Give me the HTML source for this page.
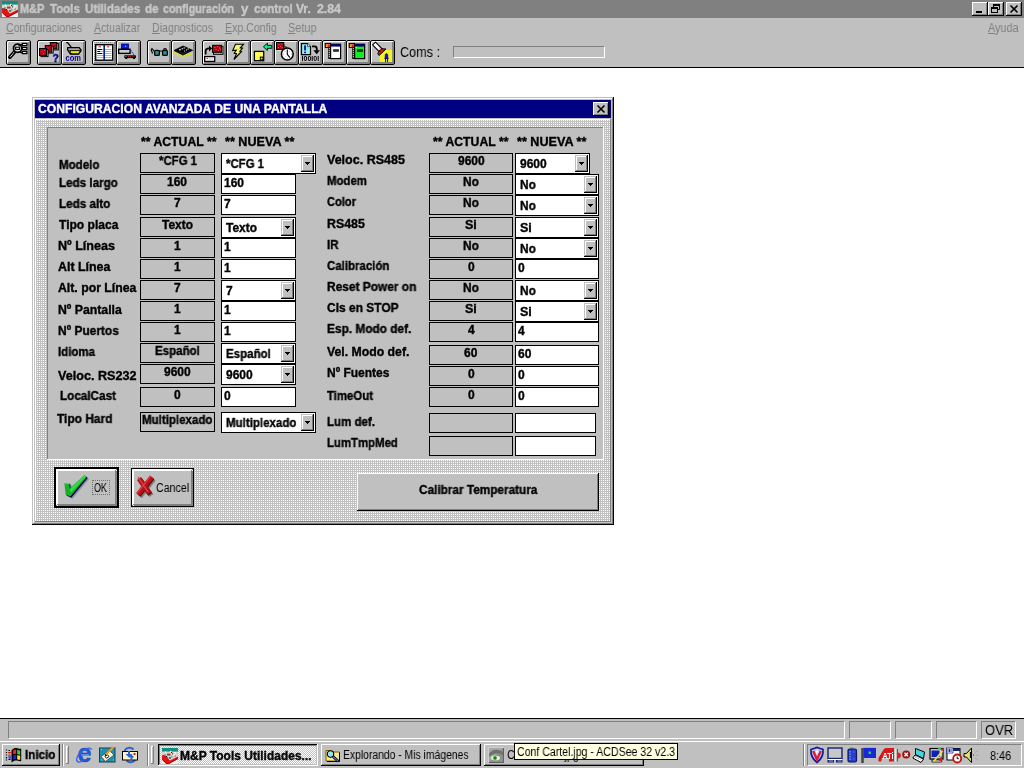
<!DOCTYPE html>
<html lang="es"><head><meta charset="utf-8"><title>M&amp;P Tools</title>
<style>
html,body{margin:0;padding:0}
body{width:1024px;height:768px;overflow:hidden;background:#fff;position:relative;font-family:"Liberation Sans",sans-serif}
div,svg.a{position:absolute}
.t{position:absolute;white-space:nowrap;transform-origin:0 0;display:block;will-change:transform}
.t u{text-decoration:underline}
.dither{background-color:#c0c0c0;background-image:linear-gradient(90deg,#c0c0c0 50%,transparent 50%),linear-gradient(#fff 50%,#c0c0c0 50%);background-size:2px 2px}
.dither2{background-color:#fff;background-image:linear-gradient(45deg,#c0c0c0 25%,transparent 25%,transparent 75%,#c0c0c0 75%),linear-gradient(45deg,#c0c0c0 25%,transparent 25%,transparent 75%,#c0c0c0 75%);background-size:2px 2px;background-position:0 0,1px 1px}
.tb{width:25px;height:25px;box-sizing:border-box;border:1px solid #000;border-radius:2px;background:#c0c0c0;box-shadow:inset 1px 1px 0 #fff,inset -1px -1px 0 #808080,inset -2px -2px 0 #808080}
.tb svg{position:absolute;left:0;top:0;will-change:transform}
</style></head>
<body>
<div style="left:0px;top:0px;width:1024px;height:18px;background:#808080"></div>
<div style="left:0px;top:18px;width:1024px;height:49px;background:#c0c0c0"></div>
<div style="left:0px;top:67px;width:1024px;height:1px;background:#000"></div>
<svg class="a" style="left:2px;top:1px" width="16" height="16" viewBox="0 0 16 16"><rect width="16" height="16" fill="#ececec"/><rect width="16" height="3.800" fill="#109080"/><path d="M0 3.800h16v5L8 12.800 3 7.200 0 8z" fill="#d8d4cc"/><path d="M0 8L3 7.200 8 12.600 16 8.400V10.800L6.500 16H4.500L0 11.500z" fill="#e81010"/><path d="M0.500 11.800L4.700 15.800h1.600L16 10.600" fill="none" stroke="#a00000" stroke-width="1"/><path d="M.5 7.500h1M2.500 7h1M9 4.500h1.200M10 6h1.200M12.500 8h1M8 10h1M4 8l1.500 1.500" stroke="#101010" stroke-width="1"/><path d="M3.500 3.600v1.600M8 3.600h1.400M12 4.800h2M6.500 8.500h1M10.500 7h2.500M7 11h.8" stroke="#fff" stroke-width="1.100"/><path d="M5 5.600h3.500v2H5z" fill="#984030"/><path d="M6.800 8.800h1.400v2H6.800z" fill="#208878"/><path d="M9 7.500h1.500v2.500H9z" fill="#b0a880"/></svg>
<span class="t" id="t0" style="left:20.40px;top:1.84px;font-size:12px;line-height:14px;color:#c8c8c8;transform:scaleX(0.9073);font-weight:bold;-webkit-text-stroke:0.35px;">M&amp;P</span>
<span class="t" id="t1" style="left:50.40px;top:1.84px;font-size:12px;line-height:14px;color:#c8c8c8;transform:scaleX(0.9579);font-weight:bold;-webkit-text-stroke:0.35px;">Tools</span>
<span class="t" id="t2" style="left:84.80px;top:1.84px;font-size:12px;line-height:14px;color:#c8c8c8;transform:scaleX(0.9615);font-weight:bold;-webkit-text-stroke:0.35px;">Utilidades</span>
<span class="t" id="t3" style="left:144.80px;top:1.84px;font-size:12px;line-height:14px;color:#c8c8c8;transform:scaleX(0.9632);font-weight:bold;-webkit-text-stroke:0.35px;">de</span>
<span class="t" id="t4" style="left:162.90px;top:1.84px;font-size:12px;line-height:14px;color:#c8c8c8;transform:scaleX(0.8955);font-weight:bold;-webkit-text-stroke:0.35px;">configuración</span>
<span class="t" id="t5" style="left:240.80px;top:1.84px;font-size:12px;line-height:14px;color:#c8c8c8;transform:scaleX(1.1065);font-weight:bold;-webkit-text-stroke:0.35px;">y</span>
<span class="t" id="t6" style="left:253.55px;top:1.84px;font-size:12px;line-height:14px;color:#c8c8c8;transform:scaleX(0.9527);font-weight:bold;-webkit-text-stroke:0.35px;">control</span>
<span class="t" id="t7" style="left:296.05px;top:1.84px;font-size:12px;line-height:14px;color:#c8c8c8;transform:scaleX(1.0043);font-weight:bold;-webkit-text-stroke:0.35px;">Vr.</span>
<span class="t" id="t8" style="left:316.90px;top:1.84px;font-size:12px;line-height:14px;color:#c8c8c8;transform:scaleX(1.0231);font-weight:bold;-webkit-text-stroke:0.35px;">2.84</span>
<svg class="a" style="left:972px;top:2px" width="16" height="14" viewBox="0 0 16 14"><rect width="16" height="14" fill="#000"/><rect width="15" height="13" fill="#fff"/><rect x="1" y="1" width="14" height="12" fill="#808080"/><rect x="1" y="1" width="13" height="11" fill="#c0c0c0"/><rect x="4" y="9" width="6" height="2" fill="#000"/></svg>
<svg class="a" style="left:988px;top:2px" width="16" height="14" viewBox="0 0 16 14"><rect width="16" height="14" fill="#000"/><rect width="15" height="13" fill="#fff"/><rect x="1" y="1" width="14" height="12" fill="#808080"/><rect x="1" y="1" width="13" height="11" fill="#c0c0c0"/><path d="M5.5 2.5h6v1h-6zM5.5 3v4M11.5 3v4.5h-2M3.5 5.5h6v1h-6zM3.5 6v5M9.5 6v5M3.5 10.5h6" stroke="#000" fill="none"/><rect x="5" y="2" width="7" height="2" fill="#000"/><rect x="3" y="5" width="7" height="2" fill="#000"/></svg>
<svg class="a" style="left:1006px;top:2px" width="16" height="14" viewBox="0 0 16 14"><rect width="16" height="14" fill="#000"/><rect width="15" height="13" fill="#fff"/><rect x="1" y="1" width="14" height="12" fill="#808080"/><rect x="1" y="1" width="13" height="11" fill="#c0c0c0"/><path d="M4.5 3.5l7 7M11.5 3.5l-7 7" stroke="#000" stroke-width="1.6" fill="none"/></svg>
<span class="t" id="t9" style="left:6.30px;top:20.84px;font-size:12px;line-height:14px;color:#808080;transform:scaleX(0.8774);"><u>C</u>onfiguraciones</span>
<span class="t" id="t10" style="left:94.10px;top:20.84px;font-size:12px;line-height:14px;color:#808080;transform:scaleX(0.8747);"><u>A</u>ctualizar</span>
<span class="t" id="t11" style="left:152.30px;top:20.84px;font-size:12px;line-height:14px;color:#808080;transform:scaleX(0.8862);"><u>D</u>iagnosticos</span>
<span class="t" id="t12" style="left:224.70px;top:20.84px;font-size:12px;line-height:14px;color:#808080;transform:scaleX(0.8822);"><u>E</u>xp.Config</span>
<span class="t" id="t13" style="left:287.70px;top:20.84px;font-size:12px;line-height:14px;color:#808080;transform:scaleX(0.9084);"><u>S</u>etup</span>
<span class="t" id="t14" style="left:987.70px;top:20.84px;font-size:12px;line-height:14px;color:#808080;transform:scaleX(0.9016);"><u>A</u>yuda</span>
<div class="tb" style="left:6px;top:40px"><svg style="left:-1px;top:-1px" width="25" height="25" viewBox="0 0 25 25"><path d="M13.5 4.5h3M15.5 8.5h1.5M13.5 12.5h3" stroke="#000" stroke-width="1.2"/><rect x="16.3" y="3.4" width="4.6" height="2.2" fill="#fff" stroke="#000" stroke-width="1.3"/><rect x="16.3" y="7.4" width="4.6" height="2.2" fill="#fff" stroke="#000" stroke-width="1.3"/><rect x="16.3" y="11.4" width="4.6" height="2.2" fill="#fff" stroke="#000" stroke-width="1.3"/><path d="M8.3 12.2L3.8 17.2" stroke="#000" stroke-width="3.6" stroke-linecap="round"/><path d="M8 12.5L4 16.9" stroke="#fff" stroke-width="1.1" stroke-dasharray="1 0.7"/><circle cx="11.6" cy="8.3" r="4.1" fill="#e0e0e0" stroke="#000" stroke-width="1.8"/><rect x="9.6" y="7.2" width="3.8" height="2.2" fill="#fff" stroke="#000" stroke-width="1.1"/><path d="M12.5 5.6h1.5" stroke="#000" stroke-width="1.2"/></svg></div>
<div class="tb" style="left:37px;top:40px"><svg style="left:-1px;top:-1px" width="25" height="25" viewBox="0 0 25 25"><rect x="14.5" y="3.3" width="6.8" height="6.6" fill="#d8d8d8" stroke="#000"/><rect x="13.3" y="2.5" width="6.5" height="6.3" fill="#a80814" stroke="#000"/><rect x="9.6" y="6.3" width="6.6" height="6.8" fill="#d8d8d8" stroke="#000"/><rect x="8.3" y="5.5" width="6.4" height="6.6" fill="#a80814" stroke="#000"/><rect x="4" y="9.6" width="7" height="7" fill="#d8d8d8" stroke="#000"/><rect x="2.5" y="8.5" width="7" height="7" fill="#b00814" stroke="#000"/><path d="M4.5 11.5h1M7 10.5h1M6 13.5h1M10.5 8h1M15.5 5h1M17.5 4h1" stroke="#f04848"/><text x="15.4" y="21.8" font-family="Liberation Sans,sans-serif" font-weight="bold" font-size="10.5" stroke="#000090" stroke-width=".4" fill="#000090">?</text></svg></div>
<div class="tb" style="left:61px;top:40px"><svg style="left:-1px;top:-1px" width="25" height="25" viewBox="0 0 25 25"><path d="M5.2 2.6h1.4l3.6 4.6" fill="none" stroke="#000" stroke-width="1.3"/><path d="M6.8 7.6h11.4l1.8 2.4v.8l-2.400 3.200h-8.200l-2.900-4.400z" fill="#a8a8a8" stroke="#000" stroke-width="1.300"/><path d="M8.600 10.600h11l-2.200 3.200h-6.600z" fill="#e0e000" stroke="#000" stroke-width=".9"/><path d="M10 12.200h8" stroke="#f8f8a0" stroke-width=".9" stroke-dasharray="1 1"/><text x="4.600" y="20.800" font-family="Liberation Sans,sans-serif" font-weight="bold" font-size="8.500" textLength="15.400" lengthAdjust="spacingAndGlyphs" fill="#000090">com</text></svg></div>
<div class="tb" style="left:92px;top:40px"><svg style="left:-1px;top:-1px" width="25" height="25" viewBox="0 0 25 25"><path d="M2.5 21V2.5H20" fill="none" stroke="#808080" stroke-dasharray="1 1"/><rect x="3.7" y="4.7" width="17" height="15.5" fill="#fff" stroke="#000" stroke-width="1.4"/><path d="M4.5 9.5h15M4.5 11.5h15M4.5 13.5h15M4.5 15.5h15M4.5 17.5h15" stroke="#40e0e0" stroke-width="1.1"/><path d="M12.2 5v15" stroke="#002080" stroke-width="1.6"/><path d="M6.5 6.8h2.5M14.8 6.8h2.5" stroke="#b02020" stroke-width="1"/><path d="M5.5 9.5h4.5M5.5 11.5h2.5M5.5 13.5h4.5" stroke="#000" stroke-width="1"/></svg></div>
<div class="tb" style="left:116px;top:40px"><svg style="left:-1px;top:-1px" width="25" height="25" viewBox="0 0 25 25"><rect x="5.5" y="4" width="7" height="5" fill="#0020e0" stroke="#000090" stroke-width="0.8"/><rect x="9" y="5.8" width="1.2" height="1" fill="#c0d0ff"/><rect x="2.7" y="9.3" width="11.3" height="4" fill="#fff" stroke="#000" stroke-width="1.5"/><path d="M3.5 11h10" stroke="#b09090" stroke-width="1"/><path d="M14.8 10.5l3.5 4.8" stroke="#1020a0" stroke-width="1.2" stroke-dasharray="1 1"/><rect x="8.3" y="15.3" width="11.6" height="2.8" fill="#000"/><rect x="9.3" y="18" width="2" height="1" fill="#000"/><rect x="17" y="18" width="2" height="1" fill="#000"/><path d="M9.5 16.6h1" stroke="#a0c0a0"/><path d="M12 16.6h6.5" stroke="#c02020" stroke-dasharray="1.2 0.9"/></svg></div>
<div class="tb" style="left:147px;top:40px"><svg style="left:-1px;top:-1px" width="25" height="25" viewBox="0 0 25 25"><path d="M5.5 13.5L4.2 9.5 5 8.5l2.8 3.3" fill="none" stroke="#000" stroke-width="1.1"/><path d="M12 11h4M16.5 10.5c0-2.5 3-2.5 3 0" fill="none" stroke="#000" stroke-width="1.1"/><rect x="7.6" y="10.4" width="4.8" height="5" rx="1.2" fill="#209090" stroke="#000" stroke-width="1.3"/><rect x="15.6" y="10.4" width="4.8" height="5" rx="1.2" fill="#209090" stroke="#000" stroke-width="1.3"/></svg></div>
<div class="tb" style="left:171px;top:40px"><svg style="left:-1px;top:-1px" width="25" height="25" viewBox="0 0 25 25"><path d="M3 12.5L12 16.8 21.6 12.3" fill="none" stroke="#e8e800" stroke-width="2.6" stroke-dasharray="1 0.9"/><path d="M3 10.5L12 6 21.6 10.3 12 15z" fill="#000" stroke="#000" stroke-width="0.8"/><path d="M5 10.8L12 14 20 10.5 12 13z" fill="#203060"/><path d="M8 9.8h2M10.5 8.8h1.5M12.5 8h1.5M13.2 11h1M15 10h1M16.5 9h1.2" stroke="#fff" stroke-width="1"/></svg></div>
<div class="tb" style="left:202px;top:40px"><svg style="left:-1px;top:-1px" width="25" height="25" viewBox="0 0 25 25"><rect x="11.5" y="6.3" width="9.5" height="8" fill="#c0c0c0" stroke="#000"/><rect x="10.5" y="5.3" width="9" height="7" fill="#a80814" stroke="#000"/><path d="M12.5 7.5h1M15 6.8h1M17 8h1M13.5 9.5h1M16 10.5h1M18 9.3h1" stroke="#ff5050"/><path d="M3.6 14.5V11c0-1.8 1.2-2.6 3.5-2.6h1" fill="none" stroke="#000" stroke-width="1.8"/><path d="M7 5.5l3.2 3-3.2 3z" fill="#000"/><rect x="2.7" y="16.6" width="10" height="4.8" fill="#fff" stroke="#000" stroke-width="1.3"/><path d="M4.5 18.5h1.5" stroke="#e02060" stroke-width="1.2"/><path d="M6.5 19h5" stroke="#c8c8c8" stroke-width="1.2"/></svg></div>
<div class="tb" style="left:226px;top:40px"><svg style="left:-1px;top:-1px" width="25" height="25" viewBox="0 0 25 25"><path d="M9.5 4.2h8l-3.2 3.6 2.2 0.4-2.6 3 1.6 0.3-7.6 8 2.6-5.8-2.2-0.4 2-3.2-3.6 0.4z" fill="#f4f470" stroke="#000" stroke-width="1.1" stroke-linejoin="miter"/></svg></div>
<div class="tb" style="left:250px;top:40px"><svg style="left:-1px;top:-1px" width="25" height="25" viewBox="0 0 25 25"><rect x="4.4" y="11.4" width="9.3" height="9.3" fill="#ffff50" stroke="#000" stroke-width="1.3"/><rect x="9.8" y="16.6" width="3.4" height="3.6" fill="#000"/><circle cx="11.6" cy="18.5" r="1" fill="#e8e040"/><path d="M13.4 6.8l4-3.6v2.2h4.4v2.9h-4.4v2.2z" fill="#10e888" stroke="#000" stroke-width="0.9"/></svg></div>
<div class="tb" style="left:274px;top:40px"><svg style="left:-1px;top:-1px" width="25" height="25" viewBox="0 0 25 25"><path d="M9.5 3v7.5h-6" fill="none" stroke="#e0e0e0" stroke-width="1"/><rect x="2.5" y="2.5" width="7.2" height="7" fill="#a80814" stroke="#000"/><path d="M4.5 4.5h1M7 4h1M6 6.5h1M4 7.5h1M7.5 7.5h1" stroke="#ff5050"/><path d="M9.8 4v3h3" fill="none" stroke="#000" stroke-width="1.2"/><circle cx="13.3" cy="14" r="5.9" fill="#fff" stroke="#000" stroke-width="1.5"/><path d="M13.3 9.5v4.8l2.6 3.4" fill="none" stroke="#000" stroke-width="1.1"/><path d="M9 14h1M17 14h1M13.3 18.3v.8M10.5 11l.6.6M16 11l-.5.6M10.8 17l.5-.5" stroke="#a0a0a0" stroke-width="0.9"/></svg></div>
<div class="tb" style="left:298px;top:40px"><svg style="left:-1px;top:-1px" width="25" height="25" viewBox="0 0 25 25"><path d="M3.5 3.6h6l3 3v8h-9z" fill="#80e8e8" stroke="#000" stroke-width="1.2"/><path d="M9.5 3.6v3h3" fill="#fff" stroke="#000" stroke-width="0.8"/><path d="M4.5 5h5M4.5 7h7M4.5 9h7M4.5 11h7M4.5 13h7" stroke="#d0ffff" stroke-width="0.9" stroke-dasharray="1 1"/><rect x="6.2" y="5.4" width="1.7" height="5" fill="#000090"/><rect x="6.2" y="11.6" width="1.7" height="1.6" fill="#000090"/><path d="M14 6.3h2.5c1.6 0 2.3 1 2.3 2.5v2" fill="none" stroke="#000" stroke-width="1.8"/><path d="M15.4 10.3h6.6l-3.3 4z" fill="#000"/><text x="3.600" y="21" font-family="Liberation Sans,sans-serif" font-size="6.800" font-weight="bold" textLength="17.600" lengthAdjust="spacingAndGlyphs" fill="#000">I00I0I</text></svg></div>
<div class="tb" style="left:322px;top:40px"><svg style="left:-1px;top:-1px" width="25" height="25" viewBox="0 0 25 25"><rect x="8.6" y="4.2" width="10" height="14.4" fill="#fff" stroke="#000" stroke-width="1.2"/><rect x="9" y="4" width="9.6" height="2.6" fill="#000060"/><rect x="9.3" y="6.8" width="2" height="1" fill="#a0f0f0"/><rect x="11.2" y="9.3" width="5.6" height="2.4" fill="#000"/><path d="M12 10.5h4" stroke="#304060" stroke-width="0.8"/><rect x="6.2" y="7.5" width="2.4" height="11.4" fill="#000"/><path d="M7.4 8.2v10" stroke="#fff" stroke-width="1.1" stroke-dasharray="1 1"/><rect x="3.2" y="3.4" width="5.4" height="4.2" fill="#e02020" stroke="#000" stroke-width="0.9"/><path d="M4 5h2M4 6.4h1.5" stroke="#ffe040" stroke-width="1"/><path d="M6.5 4.5h1.5" stroke="#ff6060" stroke-width="1"/></svg></div>
<div class="tb" style="left:346px;top:40px"><svg style="left:-1px;top:-1px" width="25" height="25" viewBox="0 0 25 25"><rect x="8.6" y="4.2" width="10" height="14.4" fill="#10f020" stroke="#000" stroke-width="1.2"/><rect x="9" y="4" width="9.6" height="2.6" fill="#000060"/><rect x="9.3" y="6.8" width="2" height="1" fill="#a0f0f0"/><rect x="11.2" y="9.3" width="5.6" height="2.4" fill="#000"/><path d="M12 10.5h4" stroke="#304060" stroke-width="0.8"/><rect x="6.2" y="7.5" width="2.4" height="11.4" fill="#000"/><path d="M7.4 8.2v10" stroke="#fff" stroke-width="1.1" stroke-dasharray="1 1"/><rect x="3.2" y="3.4" width="5.4" height="4.2" fill="#e02020" stroke="#000" stroke-width="0.9"/><path d="M4 5h2M4 6.4h1.5" stroke="#ffe040" stroke-width="1"/><path d="M6.5 4.5h1.5" stroke="#ff6060" stroke-width="1"/></svg></div>
<div class="tb" style="left:370px;top:40px"><svg style="left:-1px;top:-1px" width="25" height="25" viewBox="0 0 25 25"><rect x="9.7" y="9.9" width="12.4" height="12.1" fill="#f4f420"/><path d="M2.600 4.800L5.600 2.200 12 8.800 9 11.400z" fill="#fff" stroke="#000" stroke-width="1.100"/><path d="M9 11.2L11.8 8.6 16 9l-7 6.6-1.2-2z" fill="#c01818" stroke="#000" stroke-width="0.9"/><path d="M9.6 8.6l1 .8" stroke="#e06080" stroke-width="1.2"/><path d="M15.2 18.2v-2.4c0-3 2.6-3 2.6 0v2.4z" fill="#1010e0" stroke="#000090" stroke-width="0.7"/><path d="M14.4 18.4h4.2" stroke="#000090" stroke-width="1"/><path d="M15.6 18.6v3.4M17.6 18.6v3.4" stroke="#000060" stroke-width="1"/></svg></div>
<span class="t" id="t15" style="left:399.60px;top:43.65px;font-size:14px;line-height:17px;color:#000;transform:scaleX(0.9020);">Coms :</span>
<div style="left:453px;top:46px;width:152px;height:12px;box-sizing:border-box;border:1px solid;border-color:#808080 #fff #fff #808080"></div>
<div style="left:32px;top:97px;width:582px;height:428px;background:#000"></div>
<div style="left:32px;top:97px;width:581px;height:427px;background:#c0c0c0"></div>
<div style="left:33px;top:98px;width:580px;height:426px;background:#808080"></div>
<div style="left:33px;top:98px;width:579px;height:425px;background:#fff"></div>
<div style="left:34px;top:99px;width:578px;height:424px;background:#c0c0c0"></div>
<div style="left:35px;top:100px;width:576px;height:18px;background:#000080"></div>
<span class="t" id="t16" style="left:37.80px;top:101.84px;font-size:12px;line-height:14px;color:#fff;transform:scaleX(1.0127);font-weight:bold;-webkit-text-stroke:0.35px;">CONFIGURACION AVANZADA DE UNA PANTALLA</span>
<svg class="a" style="left:593px;top:102px" width="16" height="14" viewBox="0 0 16 14"><rect width="16" height="14" fill="#000"/><rect width="15" height="13" fill="#fff"/><rect x="1" y="1" width="14" height="12" fill="#808080"/><rect x="1" y="1" width="13" height="11" fill="#c0c0c0"/><path d="M4.5 3.5l7 7M11.5 3.5l-7 7" stroke="#000" stroke-width="1.6" fill="none"/></svg>
<div style="left:35px;top:119px;width:576px;height:403px;background:#808080"></div>
<div style="left:35px;top:119px;width:575px;height:402px;background:#fff"></div>
<div class="dither" style="left:36px;top:120px;width:574px;height:401px;"></div>
<div style="left:47px;top:127px;width:557px;height:333px;background:#fff"></div>
<div style="left:47px;top:127px;width:556px;height:332px;background:#808080"></div>
<div style="left:48px;top:128px;width:555px;height:331px;background:#c0c0c0"></div>
<span class="t" id="t17" style="left:140.80px;top:134.84px;font-size:12px;line-height:14px;color:#000;transform:scaleX(1.0187);font-weight:bold;-webkit-text-stroke:0.35px;">** ACTUAL **</span>
<span class="t" id="t18" style="left:224.80px;top:134.84px;font-size:12px;line-height:14px;color:#000;transform:scaleX(1.0510);font-weight:bold;-webkit-text-stroke:0.35px;">** NUEVA **</span>
<span class="t" id="t19" style="left:432.80px;top:134.84px;font-size:12px;line-height:14px;color:#000;transform:scaleX(1.0187);font-weight:bold;-webkit-text-stroke:0.35px;">** ACTUAL **</span>
<span class="t" id="t20" style="left:516.80px;top:134.84px;font-size:12px;line-height:14px;color:#000;transform:scaleX(1.0510);font-weight:bold;-webkit-text-stroke:0.35px;">** NUEVA **</span>
<span class="t" id="t21" style="left:58.80px;top:157.84px;font-size:12px;line-height:14px;color:#000;transform:scaleX(0.9619);font-weight:bold;-webkit-text-stroke:0.35px;">Modelo</span>
<div style="left:140px;top:153px;width:75px;height:20px;box-sizing:border-box;border:1px solid #000;background:#c0c0c0"></div>
<span class="t" id="t22" style="left:158.50px;top:153.84px;font-size:12px;line-height:14px;color:#000;transform:scaleX(0.9496);font-weight:bold;-webkit-text-stroke:0.35px;">*CFG 1</span>
<span class="t" id="t23" style="left:58.80px;top:175.84px;font-size:12px;line-height:14px;color:#000;transform:scaleX(0.9705);font-weight:bold;-webkit-text-stroke:0.35px;">Leds largo</span>
<div style="left:140px;top:174px;width:75px;height:20px;box-sizing:border-box;border:1px solid #000;background:#c0c0c0"></div>
<span class="t" id="t24" style="left:167.48px;top:174.84px;font-size:12px;line-height:14px;color:#000;transform:scaleX(1.0000);font-weight:bold;-webkit-text-stroke:0.35px;">160</span>
<div style="left:221px;top:174px;width:75px;height:20px;box-sizing:border-box;border:1px solid #000;background:#fff"></div>
<span class="t" id="t25" style="left:224.00px;top:175.84px;font-size:12px;line-height:14px;color:#000;transform:scaleX(1.0000);font-weight:bold;-webkit-text-stroke:0.35px;">160</span>
<span class="t" id="t26" style="left:58.80px;top:196.84px;font-size:12px;line-height:14px;color:#000;transform:scaleX(0.9756);font-weight:bold;-webkit-text-stroke:0.35px;">Leds alto</span>
<div style="left:140px;top:195px;width:75px;height:20px;box-sizing:border-box;border:1px solid #000;background:#c0c0c0"></div>
<span class="t" id="t27" style="left:174.16px;top:195.84px;font-size:12px;line-height:14px;color:#000;transform:scaleX(1.0000);font-weight:bold;-webkit-text-stroke:0.35px;">7</span>
<div style="left:221px;top:195px;width:75px;height:20px;box-sizing:border-box;border:1px solid #000;background:#fff"></div>
<span class="t" id="t28" style="left:224.00px;top:196.84px;font-size:12px;line-height:14px;color:#000;transform:scaleX(1.0000);font-weight:bold;-webkit-text-stroke:0.35px;">7</span>
<span class="t" id="t29" style="left:58.80px;top:217.84px;font-size:12px;line-height:14px;color:#000;transform:scaleX(1.0044);font-weight:bold;-webkit-text-stroke:0.35px;">Tipo placa</span>
<div style="left:140px;top:217px;width:75px;height:20px;box-sizing:border-box;border:1px solid #000;background:#c0c0c0"></div>
<span class="t" id="t30" style="left:162.00px;top:217.84px;font-size:12px;line-height:14px;color:#000;transform:scaleX(0.9960);font-weight:bold;-webkit-text-stroke:0.35px;">Texto</span>
<span class="t" id="t31" style="left:58.40px;top:238.84px;font-size:12px;line-height:14px;color:#000;transform:scaleX(1.0477);font-weight:bold;-webkit-text-stroke:0.35px;">Nº Líneas</span>
<div style="left:140px;top:238px;width:75px;height:20px;box-sizing:border-box;border:1px solid #000;background:#c0c0c0"></div>
<span class="t" id="t32" style="left:174.16px;top:238.84px;font-size:12px;line-height:14px;color:#000;transform:scaleX(1.0000);font-weight:bold;-webkit-text-stroke:0.35px;">1</span>
<div style="left:221px;top:238px;width:75px;height:20px;box-sizing:border-box;border:1px solid #000;background:#fff"></div>
<span class="t" id="t33" style="left:224.00px;top:239.84px;font-size:12px;line-height:14px;color:#000;transform:scaleX(1.0000);font-weight:bold;-webkit-text-stroke:0.35px;">1</span>
<span class="t" id="t34" style="left:58.05px;top:259.84px;font-size:12px;line-height:14px;color:#000;transform:scaleX(1.0341);font-weight:bold;-webkit-text-stroke:0.35px;">Alt Línea</span>
<div style="left:140px;top:259px;width:75px;height:20px;box-sizing:border-box;border:1px solid #000;background:#c0c0c0"></div>
<span class="t" id="t35" style="left:174.16px;top:259.84px;font-size:12px;line-height:14px;color:#000;transform:scaleX(1.0000);font-weight:bold;-webkit-text-stroke:0.35px;">1</span>
<div style="left:221px;top:259px;width:75px;height:20px;box-sizing:border-box;border:1px solid #000;background:#fff"></div>
<span class="t" id="t36" style="left:224.00px;top:260.84px;font-size:12px;line-height:14px;color:#000;transform:scaleX(1.0000);font-weight:bold;-webkit-text-stroke:0.35px;">1</span>
<span class="t" id="t37" style="left:58.05px;top:280.84px;font-size:12px;line-height:14px;color:#000;transform:scaleX(1.0225);font-weight:bold;-webkit-text-stroke:0.35px;">Alt. por Línea</span>
<div style="left:140px;top:280px;width:75px;height:20px;box-sizing:border-box;border:1px solid #000;background:#c0c0c0"></div>
<span class="t" id="t38" style="left:174.16px;top:280.84px;font-size:12px;line-height:14px;color:#000;transform:scaleX(1.0000);font-weight:bold;-webkit-text-stroke:0.35px;">7</span>
<span class="t" id="t39" style="left:58.40px;top:302.84px;font-size:12px;line-height:14px;color:#000;transform:scaleX(1.0223);font-weight:bold;-webkit-text-stroke:0.35px;">Nº Pantalla</span>
<div style="left:140px;top:301px;width:75px;height:20px;box-sizing:border-box;border:1px solid #000;background:#c0c0c0"></div>
<span class="t" id="t40" style="left:174.16px;top:301.84px;font-size:12px;line-height:14px;color:#000;transform:scaleX(1.0000);font-weight:bold;-webkit-text-stroke:0.35px;">1</span>
<div style="left:221px;top:301px;width:75px;height:20px;box-sizing:border-box;border:1px solid #000;background:#fff"></div>
<span class="t" id="t41" style="left:224.00px;top:302.84px;font-size:12px;line-height:14px;color:#000;transform:scaleX(1.0000);font-weight:bold;-webkit-text-stroke:0.35px;">1</span>
<span class="t" id="t42" style="left:58.40px;top:323.84px;font-size:12px;line-height:14px;color:#000;transform:scaleX(0.9957);font-weight:bold;-webkit-text-stroke:0.35px;">Nº Puertos</span>
<div style="left:140px;top:322px;width:75px;height:20px;box-sizing:border-box;border:1px solid #000;background:#c0c0c0"></div>
<span class="t" id="t43" style="left:174.16px;top:322.84px;font-size:12px;line-height:14px;color:#000;transform:scaleX(1.0000);font-weight:bold;-webkit-text-stroke:0.35px;">1</span>
<div style="left:221px;top:322px;width:75px;height:20px;box-sizing:border-box;border:1px solid #000;background:#fff"></div>
<span class="t" id="t44" style="left:224.00px;top:323.84px;font-size:12px;line-height:14px;color:#000;transform:scaleX(1.0000);font-weight:bold;-webkit-text-stroke:0.35px;">1</span>
<span class="t" id="t45" style="left:58.40px;top:344.84px;font-size:12px;line-height:14px;color:#000;transform:scaleX(0.9568);font-weight:bold;-webkit-text-stroke:0.35px;">Idioma</span>
<div style="left:140px;top:343px;width:75px;height:20px;box-sizing:border-box;border:1px solid #000;background:#c0c0c0"></div>
<span class="t" id="t46" style="left:155.10px;top:343.84px;font-size:12px;line-height:14px;color:#000;transform:scaleX(0.9596);font-weight:bold;-webkit-text-stroke:0.35px;">Español</span>
<span class="t" id="t47" style="left:58.05px;top:368.84px;font-size:12px;line-height:14px;color:#000;transform:scaleX(1.0493);font-weight:bold;-webkit-text-stroke:0.35px;">Veloc. RS232</span>
<div style="left:140px;top:364px;width:75px;height:20px;box-sizing:border-box;border:1px solid #000;background:#c0c0c0"></div>
<span class="t" id="t48" style="left:164.15px;top:364.84px;font-size:12px;line-height:14px;color:#000;transform:scaleX(1.0000);font-weight:bold;-webkit-text-stroke:0.35px;">9600</span>
<span class="t" id="t49" style="left:60.30px;top:388.84px;font-size:12px;line-height:14px;color:#000;transform:scaleX(0.9763);font-weight:bold;-webkit-text-stroke:0.35px;">LocalCast</span>
<div style="left:140px;top:387px;width:75px;height:20px;box-sizing:border-box;border:1px solid #000;background:#c0c0c0"></div>
<span class="t" id="t50" style="left:174.16px;top:387.84px;font-size:12px;line-height:14px;color:#000;transform:scaleX(1.0000);font-weight:bold;-webkit-text-stroke:0.35px;">0</span>
<div style="left:221px;top:387px;width:75px;height:20px;box-sizing:border-box;border:1px solid #000;background:#fff"></div>
<span class="t" id="t51" style="left:224.00px;top:388.84px;font-size:12px;line-height:14px;color:#000;transform:scaleX(1.0000);font-weight:bold;-webkit-text-stroke:0.35px;">0</span>
<span class="t" id="t52" style="left:57.20px;top:411.84px;font-size:12px;line-height:14px;color:#000;transform:scaleX(0.9932);font-weight:bold;-webkit-text-stroke:0.35px;">Tipo Hard</span>
<div style="left:140px;top:412px;width:75px;height:20px;box-sizing:border-box;border:1px solid #000;background:#c0c0c0"></div>
<span class="t" id="t53" style="left:142.30px;top:412.84px;font-size:12px;line-height:14px;color:#000;transform:scaleX(0.9599);font-weight:bold;-webkit-text-stroke:0.35px;">Multiplexado</span>
<div style="left:221px;top:153px;width:95px;height:21px;box-sizing:border-box;border:1px solid #000;background:#fff"></div>
<svg class="a" style="left:301px;top:155px" width="13" height="17" viewBox="0 0 13 17" shape-rendering="crispEdges"><rect width="13" height="17" fill="#000"/><rect width="12" height="16" fill="#c0c0c0"/><rect x="1" y="1" width="11" height="15" fill="#808080"/><rect x="1" y="1" width="10" height="14" fill="#fff"/><rect x="2" y="2" width="9" height="13" fill="#c0c0c0"/><rect x="4" y="7" width="5" height="1"/><rect x="5" y="8" width="3" height="1"/><rect x="6" y="9" width="1" height="1"/></svg>
<span class="t" id="t54" style="left:225.80px;top:156.84px;font-size:12px;line-height:14px;color:#000;transform:scaleX(0.9496);font-weight:bold;-webkit-text-stroke:0.35px;">*CFG 1</span>
<div style="left:221px;top:217px;width:75px;height:21px;box-sizing:border-box;border:1px solid #000;background:#fff"></div>
<svg class="a" style="left:281px;top:219px" width="13" height="17" viewBox="0 0 13 17" shape-rendering="crispEdges"><rect width="13" height="17" fill="#000"/><rect width="12" height="16" fill="#c0c0c0"/><rect x="1" y="1" width="11" height="15" fill="#808080"/><rect x="1" y="1" width="10" height="14" fill="#fff"/><rect x="2" y="2" width="9" height="13" fill="#c0c0c0"/><rect x="4" y="7" width="5" height="1"/><rect x="5" y="8" width="3" height="1"/><rect x="6" y="9" width="1" height="1"/></svg>
<span class="t" id="t55" style="left:225.80px;top:220.84px;font-size:12px;line-height:14px;color:#000;transform:scaleX(0.9960);font-weight:bold;-webkit-text-stroke:0.35px;">Texto</span>
<div style="left:221px;top:280px;width:75px;height:21px;box-sizing:border-box;border:1px solid #000;background:#fff"></div>
<svg class="a" style="left:281px;top:282px" width="13" height="17" viewBox="0 0 13 17" shape-rendering="crispEdges"><rect width="13" height="17" fill="#000"/><rect width="12" height="16" fill="#c0c0c0"/><rect x="1" y="1" width="11" height="15" fill="#808080"/><rect x="1" y="1" width="10" height="14" fill="#fff"/><rect x="2" y="2" width="9" height="13" fill="#c0c0c0"/><rect x="4" y="7" width="5" height="1"/><rect x="5" y="8" width="3" height="1"/><rect x="6" y="9" width="1" height="1"/></svg>
<span class="t" id="t56" style="left:226.00px;top:283.84px;font-size:12px;line-height:14px;color:#000;transform:scaleX(1.0000);font-weight:bold;-webkit-text-stroke:0.35px;">7</span>
<div style="left:221px;top:343px;width:75px;height:21px;box-sizing:border-box;border:1px solid #000;background:#fff"></div>
<svg class="a" style="left:281px;top:345px" width="13" height="17" viewBox="0 0 13 17" shape-rendering="crispEdges"><rect width="13" height="17" fill="#000"/><rect width="12" height="16" fill="#c0c0c0"/><rect x="1" y="1" width="11" height="15" fill="#808080"/><rect x="1" y="1" width="10" height="14" fill="#fff"/><rect x="2" y="2" width="9" height="13" fill="#c0c0c0"/><rect x="4" y="7" width="5" height="1"/><rect x="5" y="8" width="3" height="1"/><rect x="6" y="9" width="1" height="1"/></svg>
<span class="t" id="t57" style="left:225.80px;top:346.84px;font-size:12px;line-height:14px;color:#000;transform:scaleX(0.9596);font-weight:bold;-webkit-text-stroke:0.35px;">Español</span>
<div style="left:221px;top:364px;width:75px;height:21px;box-sizing:border-box;border:1px solid #000;background:#fff"></div>
<svg class="a" style="left:281px;top:366px" width="13" height="17" viewBox="0 0 13 17" shape-rendering="crispEdges"><rect width="13" height="17" fill="#000"/><rect width="12" height="16" fill="#c0c0c0"/><rect x="1" y="1" width="11" height="15" fill="#808080"/><rect x="1" y="1" width="10" height="14" fill="#fff"/><rect x="2" y="2" width="9" height="13" fill="#c0c0c0"/><rect x="4" y="7" width="5" height="1"/><rect x="5" y="8" width="3" height="1"/><rect x="6" y="9" width="1" height="1"/></svg>
<span class="t" id="t58" style="left:226.00px;top:367.84px;font-size:12px;line-height:14px;color:#000;transform:scaleX(1.0000);font-weight:bold;-webkit-text-stroke:0.35px;">9600</span>
<div style="left:221px;top:412px;width:95px;height:21px;box-sizing:border-box;border:1px solid #000;background:#fff"></div>
<svg class="a" style="left:301px;top:414px" width="13" height="17" viewBox="0 0 13 17" shape-rendering="crispEdges"><rect width="13" height="17" fill="#000"/><rect width="12" height="16" fill="#c0c0c0"/><rect x="1" y="1" width="11" height="15" fill="#808080"/><rect x="1" y="1" width="10" height="14" fill="#fff"/><rect x="2" y="2" width="9" height="13" fill="#c0c0c0"/><rect x="4" y="7" width="5" height="1"/><rect x="5" y="8" width="3" height="1"/><rect x="6" y="9" width="1" height="1"/></svg>
<span class="t" id="t59" style="left:225.80px;top:415.84px;font-size:12px;line-height:14px;color:#000;transform:scaleX(0.9599);font-weight:bold;-webkit-text-stroke:0.35px;">Multiplexado</span>
<span class="t" id="t60" style="left:326.60px;top:152.84px;font-size:12px;line-height:14px;color:#000;transform:scaleX(1.0426);font-weight:bold;-webkit-text-stroke:0.35px;">Veloc. RS485</span>
<div style="left:429px;top:153px;width:84px;height:20px;box-sizing:border-box;border:1px solid #000;background:#c0c0c0"></div>
<span class="t" id="t61" style="left:457.65px;top:153.84px;font-size:12px;line-height:14px;color:#000;transform:scaleX(1.0000);font-weight:bold;-webkit-text-stroke:0.35px;">9600</span>
<span class="t" id="t62" style="left:326.60px;top:173.84px;font-size:12px;line-height:14px;color:#000;transform:scaleX(0.9500);font-weight:bold;-webkit-text-stroke:0.35px;">Modem</span>
<div style="left:429px;top:174px;width:84px;height:20px;box-sizing:border-box;border:1px solid #000;background:#c0c0c0"></div>
<span class="t" id="t63" style="left:463.10px;top:174.84px;font-size:12px;line-height:14px;color:#000;transform:scaleX(0.9875);font-weight:bold;-webkit-text-stroke:0.35px;">No</span>
<span class="t" id="t64" style="left:326.60px;top:194.84px;font-size:12px;line-height:14px;color:#000;transform:scaleX(0.9220);font-weight:bold;-webkit-text-stroke:0.35px;">Color</span>
<div style="left:429px;top:195px;width:84px;height:20px;box-sizing:border-box;border:1px solid #000;background:#c0c0c0"></div>
<span class="t" id="t65" style="left:463.10px;top:195.84px;font-size:12px;line-height:14px;color:#000;transform:scaleX(0.9875);font-weight:bold;-webkit-text-stroke:0.35px;">No</span>
<span class="t" id="t66" style="left:326.60px;top:216.84px;font-size:12px;line-height:14px;color:#000;transform:scaleX(1.0326);font-weight:bold;-webkit-text-stroke:0.35px;">RS485</span>
<div style="left:429px;top:217px;width:84px;height:20px;box-sizing:border-box;border:1px solid #000;background:#c0c0c0"></div>
<span class="t" id="t67" style="left:465.10px;top:217.84px;font-size:12px;line-height:14px;color:#000;transform:scaleX(1.0402);font-weight:bold;-webkit-text-stroke:0.35px;">Si</span>
<span class="t" id="t68" style="left:326.60px;top:237.84px;font-size:12px;line-height:14px;color:#000;transform:scaleX(0.9667);font-weight:bold;-webkit-text-stroke:0.35px;">IR</span>
<div style="left:429px;top:238px;width:84px;height:20px;box-sizing:border-box;border:1px solid #000;background:#c0c0c0"></div>
<span class="t" id="t69" style="left:463.10px;top:238.84px;font-size:12px;line-height:14px;color:#000;transform:scaleX(0.9875);font-weight:bold;-webkit-text-stroke:0.35px;">No</span>
<span class="t" id="t70" style="left:326.60px;top:258.84px;font-size:12px;line-height:14px;color:#000;transform:scaleX(0.9547);font-weight:bold;-webkit-text-stroke:0.35px;">Calibración</span>
<div style="left:429px;top:259px;width:84px;height:20px;box-sizing:border-box;border:1px solid #000;background:#c0c0c0"></div>
<span class="t" id="t71" style="left:467.66px;top:259.84px;font-size:12px;line-height:14px;color:#000;transform:scaleX(1.0000);font-weight:bold;-webkit-text-stroke:0.35px;">0</span>
<div style="left:515px;top:259px;width:84px;height:20px;box-sizing:border-box;border:1px solid #000;background:#fff"></div>
<span class="t" id="t72" style="left:518.00px;top:260.84px;font-size:12px;line-height:14px;color:#000;transform:scaleX(1.0000);font-weight:bold;-webkit-text-stroke:0.35px;">0</span>
<span class="t" id="t73" style="left:326.60px;top:279.84px;font-size:12px;line-height:14px;color:#000;transform:scaleX(0.9930);font-weight:bold;-webkit-text-stroke:0.35px;">Reset Power on</span>
<div style="left:429px;top:280px;width:84px;height:20px;box-sizing:border-box;border:1px solid #000;background:#c0c0c0"></div>
<span class="t" id="t74" style="left:463.10px;top:280.84px;font-size:12px;line-height:14px;color:#000;transform:scaleX(0.9875);font-weight:bold;-webkit-text-stroke:0.35px;">No</span>
<span class="t" id="t75" style="left:326.60px;top:300.84px;font-size:12px;line-height:14px;color:#000;transform:scaleX(0.9970);font-weight:bold;-webkit-text-stroke:0.35px;">Cls en STOP</span>
<div style="left:429px;top:301px;width:84px;height:20px;box-sizing:border-box;border:1px solid #000;background:#c0c0c0"></div>
<span class="t" id="t76" style="left:465.10px;top:301.84px;font-size:12px;line-height:14px;color:#000;transform:scaleX(1.0402);font-weight:bold;-webkit-text-stroke:0.35px;">Si</span>
<span class="t" id="t77" style="left:326.60px;top:321.84px;font-size:12px;line-height:14px;color:#000;transform:scaleX(0.9889);font-weight:bold;-webkit-text-stroke:0.35px;">Esp. Modo def.</span>
<div style="left:429px;top:322px;width:84px;height:20px;box-sizing:border-box;border:1px solid #000;background:#c0c0c0"></div>
<span class="t" id="t78" style="left:467.66px;top:322.84px;font-size:12px;line-height:14px;color:#000;transform:scaleX(1.0000);font-weight:bold;-webkit-text-stroke:0.35px;">4</span>
<div style="left:515px;top:322px;width:84px;height:20px;box-sizing:border-box;border:1px solid #000;background:#fff"></div>
<span class="t" id="t79" style="left:518.00px;top:323.84px;font-size:12px;line-height:14px;color:#000;transform:scaleX(1.0000);font-weight:bold;-webkit-text-stroke:0.35px;">4</span>
<span class="t" id="t80" style="left:326.60px;top:344.84px;font-size:12px;line-height:14px;color:#000;transform:scaleX(1.0214);font-weight:bold;-webkit-text-stroke:0.35px;">Vel. Modo def.</span>
<div style="left:429px;top:345px;width:84px;height:20px;box-sizing:border-box;border:1px solid #000;background:#c0c0c0"></div>
<span class="t" id="t81" style="left:464.32px;top:345.84px;font-size:12px;line-height:14px;color:#000;transform:scaleX(1.0000);font-weight:bold;-webkit-text-stroke:0.35px;">60</span>
<div style="left:515px;top:345px;width:84px;height:20px;box-sizing:border-box;border:1px solid #000;background:#fff"></div>
<span class="t" id="t82" style="left:518.00px;top:346.84px;font-size:12px;line-height:14px;color:#000;transform:scaleX(1.0000);font-weight:bold;-webkit-text-stroke:0.35px;">60</span>
<span class="t" id="t83" style="left:326.60px;top:365.84px;font-size:12px;line-height:14px;color:#000;transform:scaleX(1.0002);font-weight:bold;-webkit-text-stroke:0.35px;">Nº Fuentes</span>
<div style="left:429px;top:366px;width:84px;height:20px;box-sizing:border-box;border:1px solid #000;background:#c0c0c0"></div>
<span class="t" id="t84" style="left:467.66px;top:366.84px;font-size:12px;line-height:14px;color:#000;transform:scaleX(1.0000);font-weight:bold;-webkit-text-stroke:0.35px;">0</span>
<div style="left:515px;top:366px;width:84px;height:20px;box-sizing:border-box;border:1px solid #000;background:#fff"></div>
<span class="t" id="t85" style="left:518.00px;top:367.84px;font-size:12px;line-height:14px;color:#000;transform:scaleX(1.0000);font-weight:bold;-webkit-text-stroke:0.35px;">0</span>
<span class="t" id="t86" style="left:326.60px;top:388.84px;font-size:12px;line-height:14px;color:#000;transform:scaleX(0.9473);font-weight:bold;-webkit-text-stroke:0.35px;">TimeOut</span>
<div style="left:429px;top:387px;width:84px;height:20px;box-sizing:border-box;border:1px solid #000;background:#c0c0c0"></div>
<span class="t" id="t87" style="left:467.66px;top:387.84px;font-size:12px;line-height:14px;color:#000;transform:scaleX(1.0000);font-weight:bold;-webkit-text-stroke:0.35px;">0</span>
<div style="left:515px;top:387px;width:84px;height:20px;box-sizing:border-box;border:1px solid #000;background:#fff"></div>
<span class="t" id="t88" style="left:518.00px;top:388.84px;font-size:12px;line-height:14px;color:#000;transform:scaleX(1.0000);font-weight:bold;-webkit-text-stroke:0.35px;">0</span>
<span class="t" id="t89" style="left:326.60px;top:414.84px;font-size:12px;line-height:14px;color:#000;transform:scaleX(0.9580);font-weight:bold;-webkit-text-stroke:0.35px;">Lum def.</span>
<div style="left:429px;top:413px;width:84px;height:20px;box-sizing:border-box;border:1px solid #000;background:#c0c0c0"></div>
<div style="left:515px;top:413px;width:81px;height:20px;box-sizing:border-box;border:1px solid #000;background:#fff"></div>
<span class="t" id="t90" style="left:326.60px;top:435.84px;font-size:12px;line-height:14px;color:#000;transform:scaleX(0.9481);font-weight:bold;-webkit-text-stroke:0.35px;">LumTmpMed</span>
<div style="left:429px;top:436px;width:84px;height:20px;box-sizing:border-box;border:1px solid #000;background:#c0c0c0"></div>
<div style="left:515px;top:436px;width:81px;height:20px;box-sizing:border-box;border:1px solid #000;background:#fff"></div>
<div style="left:515px;top:153px;width:75px;height:21px;box-sizing:border-box;border:1px solid #000;background:#fff"></div>
<svg class="a" style="left:575px;top:155px" width="13" height="17" viewBox="0 0 13 17" shape-rendering="crispEdges"><rect width="13" height="17" fill="#000"/><rect width="12" height="16" fill="#c0c0c0"/><rect x="1" y="1" width="11" height="15" fill="#808080"/><rect x="1" y="1" width="10" height="14" fill="#fff"/><rect x="2" y="2" width="9" height="13" fill="#c0c0c0"/><rect x="4" y="7" width="5" height="1"/><rect x="5" y="8" width="3" height="1"/><rect x="6" y="9" width="1" height="1"/></svg>
<span class="t" id="t91" style="left:520.00px;top:156.84px;font-size:12px;line-height:14px;color:#000;transform:scaleX(1.0000);font-weight:bold;-webkit-text-stroke:0.35px;">9600</span>
<div style="left:515px;top:174px;width:84px;height:21px;box-sizing:border-box;border:1px solid #000;background:#fff"></div>
<svg class="a" style="left:584px;top:176px" width="13" height="17" viewBox="0 0 13 17" shape-rendering="crispEdges"><rect width="13" height="17" fill="#000"/><rect width="12" height="16" fill="#c0c0c0"/><rect x="1" y="1" width="11" height="15" fill="#808080"/><rect x="1" y="1" width="10" height="14" fill="#fff"/><rect x="2" y="2" width="9" height="13" fill="#c0c0c0"/><rect x="4" y="7" width="5" height="1"/><rect x="5" y="8" width="3" height="1"/><rect x="6" y="9" width="1" height="1"/></svg>
<span class="t" id="t92" style="left:519.80px;top:177.84px;font-size:12px;line-height:14px;color:#000;transform:scaleX(0.9875);font-weight:bold;-webkit-text-stroke:0.35px;">No</span>
<div style="left:515px;top:195px;width:84px;height:21px;box-sizing:border-box;border:1px solid #000;background:#fff"></div>
<svg class="a" style="left:584px;top:197px" width="13" height="17" viewBox="0 0 13 17" shape-rendering="crispEdges"><rect width="13" height="17" fill="#000"/><rect width="12" height="16" fill="#c0c0c0"/><rect x="1" y="1" width="11" height="15" fill="#808080"/><rect x="1" y="1" width="10" height="14" fill="#fff"/><rect x="2" y="2" width="9" height="13" fill="#c0c0c0"/><rect x="4" y="7" width="5" height="1"/><rect x="5" y="8" width="3" height="1"/><rect x="6" y="9" width="1" height="1"/></svg>
<span class="t" id="t93" style="left:519.80px;top:198.84px;font-size:12px;line-height:14px;color:#000;transform:scaleX(0.9875);font-weight:bold;-webkit-text-stroke:0.35px;">No</span>
<div style="left:515px;top:217px;width:84px;height:21px;box-sizing:border-box;border:1px solid #000;background:#fff"></div>
<svg class="a" style="left:584px;top:219px" width="13" height="17" viewBox="0 0 13 17" shape-rendering="crispEdges"><rect width="13" height="17" fill="#000"/><rect width="12" height="16" fill="#c0c0c0"/><rect x="1" y="1" width="11" height="15" fill="#808080"/><rect x="1" y="1" width="10" height="14" fill="#fff"/><rect x="2" y="2" width="9" height="13" fill="#c0c0c0"/><rect x="4" y="7" width="5" height="1"/><rect x="5" y="8" width="3" height="1"/><rect x="6" y="9" width="1" height="1"/></svg>
<span class="t" id="t94" style="left:519.80px;top:220.84px;font-size:12px;line-height:14px;color:#000;transform:scaleX(1.0402);font-weight:bold;-webkit-text-stroke:0.35px;">Si</span>
<div style="left:515px;top:238px;width:84px;height:21px;box-sizing:border-box;border:1px solid #000;background:#fff"></div>
<svg class="a" style="left:584px;top:240px" width="13" height="17" viewBox="0 0 13 17" shape-rendering="crispEdges"><rect width="13" height="17" fill="#000"/><rect width="12" height="16" fill="#c0c0c0"/><rect x="1" y="1" width="11" height="15" fill="#808080"/><rect x="1" y="1" width="10" height="14" fill="#fff"/><rect x="2" y="2" width="9" height="13" fill="#c0c0c0"/><rect x="4" y="7" width="5" height="1"/><rect x="5" y="8" width="3" height="1"/><rect x="6" y="9" width="1" height="1"/></svg>
<span class="t" id="t95" style="left:519.80px;top:241.84px;font-size:12px;line-height:14px;color:#000;transform:scaleX(0.9875);font-weight:bold;-webkit-text-stroke:0.35px;">No</span>
<div style="left:515px;top:280px;width:84px;height:21px;box-sizing:border-box;border:1px solid #000;background:#fff"></div>
<svg class="a" style="left:584px;top:282px" width="13" height="17" viewBox="0 0 13 17" shape-rendering="crispEdges"><rect width="13" height="17" fill="#000"/><rect width="12" height="16" fill="#c0c0c0"/><rect x="1" y="1" width="11" height="15" fill="#808080"/><rect x="1" y="1" width="10" height="14" fill="#fff"/><rect x="2" y="2" width="9" height="13" fill="#c0c0c0"/><rect x="4" y="7" width="5" height="1"/><rect x="5" y="8" width="3" height="1"/><rect x="6" y="9" width="1" height="1"/></svg>
<span class="t" id="t96" style="left:519.80px;top:283.84px;font-size:12px;line-height:14px;color:#000;transform:scaleX(0.9875);font-weight:bold;-webkit-text-stroke:0.35px;">No</span>
<div style="left:515px;top:301px;width:84px;height:21px;box-sizing:border-box;border:1px solid #000;background:#fff"></div>
<svg class="a" style="left:584px;top:303px" width="13" height="17" viewBox="0 0 13 17" shape-rendering="crispEdges"><rect width="13" height="17" fill="#000"/><rect width="12" height="16" fill="#c0c0c0"/><rect x="1" y="1" width="11" height="15" fill="#808080"/><rect x="1" y="1" width="10" height="14" fill="#fff"/><rect x="2" y="2" width="9" height="13" fill="#c0c0c0"/><rect x="4" y="7" width="5" height="1"/><rect x="5" y="8" width="3" height="1"/><rect x="6" y="9" width="1" height="1"/></svg>
<span class="t" id="t97" style="left:519.80px;top:304.84px;font-size:12px;line-height:14px;color:#000;transform:scaleX(1.0402);font-weight:bold;-webkit-text-stroke:0.35px;">Si</span>
<div style="left:54px;top:467px;width:65px;height:41px;background:#000"></div>
<div style="left:56px;top:469px;width:61px;height:37px;background:#fff"></div>
<div style="left:58px;top:471px;width:59px;height:35px;background:#808080"></div>
<div style="left:56px;top:505px;width:1px;height:1px;background:#808080"></div>
<div style="left:57px;top:504px;width:1px;height:1px;background:#808080"></div>
<div style="left:116px;top:469px;width:1px;height:1px;background:#808080"></div>
<div style="left:115px;top:470px;width:1px;height:1px;background:#808080"></div>
<div style="left:58px;top:471px;width:57px;height:33px;background:#c0c0c0"></div>
<svg class="a" style="left:62px;top:472px" width="30" height="30" viewBox="0 0 30 30"><path d="M2.4 11h5l.4 5.600L22.600 3l2.200 1.800L8.400 24.600 3.600 22.400z" fill="#909090" transform="translate(2.2,2.2)"/><path d="M2.4 11h5l.4 5.600L22.600 3l2.200 1.800L8.400 24.600 3.600 22.400z" fill="#000060" transform="translate(.9,1.1)"/><path d="M2.4 11h5l.4 5.600L22.600 3l2.200 1.800L8.400 24.600 3.600 22.400z" fill="#18b028"/><path d="M7.800 17.400L22.700 3.600l1.300 1L9 20.500z" fill="#30e040"/><path d="M2.800 11.500h4.200" fill="none" stroke="#40e050" stroke-width="1.200"/></svg>
<span class="t" id="t98" style="left:93.70px;top:480.84px;font-size:12px;line-height:14px;color:#000;transform:scaleX(0.7495);">OK</span>
<div style="left:92px;top:480px;width:18px;height:15px;box-sizing:border-box;border:1px dotted #707070"></div>
<div style="left:131px;top:468px;width:63px;height:39px;background:#000"></div>
<div style="left:132px;top:469px;width:61px;height:37px;background:#fff"></div>
<div style="left:134px;top:471px;width:59px;height:35px;background:#808080"></div>
<div style="left:132px;top:505px;width:1px;height:1px;background:#808080"></div>
<div style="left:133px;top:504px;width:1px;height:1px;background:#808080"></div>
<div style="left:192px;top:469px;width:1px;height:1px;background:#808080"></div>
<div style="left:191px;top:470px;width:1px;height:1px;background:#808080"></div>
<div style="left:134px;top:471px;width:57px;height:33px;background:#c0c0c0"></div>
<svg class="a" style="left:133px;top:472px" width="26" height="30" viewBox="0 0 26 30"><g transform="translate(2,2.200)"><path d="M6 6.500L16.500 21.500" stroke="#808080" stroke-width="4.800" stroke-linecap="butt"/><path d="M18.800 5L5 22.500" stroke="#808080" stroke-width="4.800" stroke-linecap="butt"/></g><g transform="translate(.7,.8)"><path d="M6 6.500L16.500 21.500" stroke="#500000" stroke-width="4.800" stroke-linecap="butt"/><path d="M18.800 5L5 22.500" stroke="#500000" stroke-width="4.800" stroke-linecap="butt"/></g><path d="M6 6.500L16.500 21.500" stroke="#b81018" stroke-width="4.800" stroke-linecap="butt"/><path d="M18.800 5L5 22.500" stroke="#b81018" stroke-width="4.800" stroke-linecap="butt"/><path d="M5 5.200L15 19.800M17.600 4.200L4 21.400" stroke="#e04040" stroke-width="1.300"/></svg>
<span class="t" id="t99" style="left:155.50px;top:480.84px;font-size:12px;line-height:14px;color:#000;transform:scaleX(0.8860);">Cancel</span>
<div style="left:357px;top:473px;width:242px;height:38px;background:#000"></div>
<div style="left:357px;top:473px;width:241px;height:37px;background:#fff"></div>
<div style="left:358px;top:474px;width:240px;height:36px;background:#808080"></div>
<div style="left:358px;top:474px;width:239px;height:35px;background:#c0c0c0"></div>
<span class="t" id="t100" style="left:418.80px;top:483.34px;font-size:12px;line-height:14px;color:#000;transform:scaleX(0.9826);font-weight:bold;-webkit-text-stroke:0.35px;">Calibrar Temperatura</span>
<div style="left:0px;top:718px;width:1024px;height:1px;background:#000"></div>
<div style="left:0px;top:719px;width:1024px;height:49px;background:#c0c0c0"></div>
<div style="left:8px;top:721px;width:837px;height:18px;box-sizing:border-box;border:1px solid;border-color:#808080 #fff #fff #808080"></div>
<div style="left:849px;top:721px;width:42px;height:18px;box-sizing:border-box;border:1px solid;border-color:#808080 #fff #fff #808080"></div>
<div style="left:895px;top:721px;width:37px;height:18px;box-sizing:border-box;border:1px solid;border-color:#808080 #fff #fff #808080"></div>
<div style="left:936px;top:721px;width:41px;height:18px;box-sizing:border-box;border:1px solid;border-color:#808080 #fff #fff #808080"></div>
<div style="left:981px;top:721px;width:35px;height:18px;box-sizing:border-box;border:1px solid;border-color:#808080 #fff #fff #808080"></div>
<span class="t" id="t101" style="left:984.60px;top:721.65px;font-size:14px;line-height:17px;color:#000;transform:scaleX(0.9261);">OVR</span>
<div style="left:0px;top:741px;width:1024px;height:1px;background:#fff"></div>
<div style="left:2px;top:744px;width:58px;height:22px;background:#000"></div>
<div style="left:2px;top:744px;width:57px;height:21px;background:#fff"></div>
<div style="left:3px;top:745px;width:56px;height:20px;background:#808080"></div>
<div style="left:3px;top:745px;width:55px;height:19px;background:#c0c0c0"></div>
<span class="t" id="t102" style="left:25.00px;top:747.84px;font-size:12px;line-height:14px;color:#000;transform:scaleX(0.9699);font-weight:bold;-webkit-text-stroke:0.35px;">Inicio</span>
<div style="left:62px;top:744px;width:1px;height:22px;background:#808080"></div>
<div style="left:63px;top:744px;width:1px;height:22px;background:#fff"></div>
<div style="left:66px;top:746px;width:3px;height:18px;background:#808080"></div>
<div style="left:66px;top:746px;width:2px;height:17px;background:#fff"></div>
<div style="left:67px;top:747px;width:1px;height:16px;background:#c0c0c0"></div>
<div style="left:147px;top:744px;width:1px;height:22px;background:#808080"></div>
<div style="left:148px;top:744px;width:1px;height:22px;background:#fff"></div>
<div style="left:151px;top:746px;width:3px;height:18px;background:#808080"></div>
<div style="left:151px;top:746px;width:2px;height:17px;background:#fff"></div>
<div style="left:152px;top:747px;width:1px;height:16px;background:#c0c0c0"></div>
<div style="left:803px;top:744px;width:1px;height:22px;background:#808080"></div>
<div style="left:804px;top:744px;width:1px;height:22px;background:#fff"></div>
<div style="left:158px;top:744px;width:160px;height:22px;background:#fff"></div>
<div style="left:158px;top:744px;width:159px;height:21px;background:#000"></div>
<div style="left:159px;top:745px;width:158px;height:20px;background:#c0c0c0"></div>
<div style="left:159px;top:745px;width:157px;height:19px;background:#808080"></div>
<div class="dither2" style="left:160px;top:746px;width:156px;height:18px;"></div>
<span class="t" id="t103" style="left:180.40px;top:748.84px;font-size:12px;line-height:14px;color:#000;transform:scaleX(0.9986);font-weight:bold;-webkit-text-stroke:0.35px;">M&amp;P Tools Utilidades...</span>
<div style="left:321px;top:744px;width:160px;height:22px;background:#000"></div>
<div style="left:321px;top:744px;width:159px;height:21px;background:#fff"></div>
<div style="left:322px;top:745px;width:158px;height:20px;background:#808080"></div>
<div style="left:322px;top:745px;width:157px;height:19px;background:#c0c0c0"></div>
<span class="t" id="t104" style="left:343.20px;top:747.84px;font-size:12px;line-height:14px;color:#000;transform:scaleX(0.8631);">Explorando - Mis imágenes</span>
<div style="left:484px;top:744px;width:160px;height:22px;background:#000"></div>
<div style="left:484px;top:744px;width:159px;height:21px;background:#fff"></div>
<div style="left:485px;top:745px;width:158px;height:20px;background:#808080"></div>
<div style="left:485px;top:745px;width:157px;height:19px;background:#c0c0c0"></div>
<span class="t" id="t105" style="left:506.80px;top:747.84px;font-size:12px;line-height:14px;color:#000;transform:scaleX(0.9000);">Conf Cartel.jpg - ACDSee 3...</span>
<div style="left:807px;top:744px;width:215px;height:22px;box-sizing:border-box;border:1px solid;border-color:#808080 #fff #fff #808080"></div>
<span class="t" id="t106" style="left:990.30px;top:748.84px;font-size:12px;line-height:14px;color:#000;transform:scaleX(0.9033);">8:46</span>
<svg class="a" style="left:5px;top:747px" width="18" height="16" viewBox="0 0 18 16"><path d="M1.5 2.5v1M1.5 5v1M1.5 7.5v1M1.5 10v1.5M1.5 12.5v1" stroke="#000" stroke-width="1.2"/><path d="M3.5 3.5h1.5M3.5 12.5h2" stroke="#000"/><path d="M3 5.5h3M3.5 7h2" stroke="#e02020" stroke-width="1.2"/><path d="M3 9h3M3.5 10.8h2.5" stroke="#2020c0" stroke-width="1.2"/><path d="M6.5 3.2C9 .8 11 .6 13 1.4c1.2.5 2.2.6 3.2.2V14c-1 .5-2 .3-3.2-.2-2-.8-4-.6-6.500 1.800z" fill="#000"/><path d="M8.200 3.500c1-.9 2-1.200 3-1v4.200c-1-.1-2 .2-3 1z" fill="#e82828"/><path d="M12.200 2.800c1 .3 2 .8 3 .6v4.200c-1 .2-2-.2-3-.600z" fill="#28d838"/><path d="M8.200 8.800c1-.9 2-1.200 3-1v4.200c-1-.1-2 .2-3 1z" fill="#2020d8"/><path d="M12.200 8c1 .3 2 .8 3 .6v4.200c-1 .2-2-.2-3-.600z" fill="#f0e830"/></svg>
<svg class="a" style="left:75px;top:745px" width="19" height="19" viewBox="0 0 19 19"><text x="2.600" y="16.800" font-family="Liberation Sans,sans-serif" font-weight="bold" font-size="25" fill="#2058d8" stroke="#1840b0" stroke-width=".4">e</text><path d="M6 10h8" stroke="#90b8ff" stroke-width="1"/><path d="M16.800 4.600C15 1.500 9 3.500 4.500 8.500 1 12.500.800 16.500 3.500 17c1.500.3 3.500-.5 5-1.600" fill="none" stroke="#3068e0" stroke-width="1.300"/></svg>
<svg class="a" style="left:121px;top:746px" width="18" height="18" viewBox="0 0 18 18"><path d="M3.500 5.500c1-4 6-5 9-2" fill="none" stroke="#3060d0" stroke-width="2"/><path d="M14.500 12.500c-1 4-6 5-9 2" fill="none" stroke="#3060d0" stroke-width="2"/><rect x="1.500" y="5.500" width="15" height="8.500" fill="#fff4c8" stroke="#000" stroke-width="1"/><rect x="12.500" y="7" width="2" height="2" fill="#d02020"/><path d="M2 6.500l3 2.500M9 5v3h2.500l-3.500 3.500L4.500 8H7V5" fill="#3060d0" stroke="none"/><path d="M9.500 14v-2.500H7.500l3-3 3 3h-2V14" fill="#3060d0"/></svg>
<svg class="a" style="left:99px;top:746px" width="17" height="17" viewBox="0 0 17 17"><rect x=".5" y="2" width="15.500" height="14" fill="#2090b0" stroke="#104060" stroke-width="1"/><path d="M2 10.500l8.500-6 4.500 4.500-8.500 6.500z" fill="#f8f4e0" stroke="#404040" stroke-width=".8"/><path d="M6 10.500l2.500-1.700 1.500 1.700-2.500 1.800z" fill="#fff" stroke="#000" stroke-width=".9"/><path d="M7 8.500L14.500 1" stroke="#f0a020" stroke-width="2"/><path d="M6 9.500l1-1" stroke="#000" stroke-width="1.500"/><path d="M2 3.500h1M14 14h1M2 14h1" stroke="#80e0f0" stroke-width="1.200"/></svg>
<svg class="a" style="left:162px;top:748px" width="16" height="16" viewBox="0 0 16 16"><rect width="16" height="16" fill="#ececec"/><rect width="16" height="3.800" fill="#109080"/><path d="M0 3.800h16v5L8 12.800 3 7.200 0 8z" fill="#d8d4cc"/><path d="M0 8L3 7.200 8 12.600 16 8.400V10.800L6.500 16H4.500L0 11.500z" fill="#e81010"/><path d="M0.500 11.800L4.700 15.800h1.600L16 10.600" fill="none" stroke="#a00000" stroke-width="1"/><path d="M.5 7.500h1M2.500 7h1M9 4.500h1.200M10 6h1.200M12.500 8h1M8 10h1M4 8l1.500 1.500" stroke="#101010" stroke-width="1"/><path d="M3.500 3.600v1.600M8 3.600h1.400M12 4.800h2M6.500 8.500h1M10.500 7h2.500M7 11h.8" stroke="#fff" stroke-width="1.100"/><path d="M5 5.600h3.500v2H5z" fill="#984030"/><path d="M6.800 8.800h1.400v2H6.800z" fill="#208878"/><path d="M9 7.500h1.500v2.500H9z" fill="#b0a880"/></svg>
<svg class="a" style="left:325px;top:747px" width="16" height="16" viewBox="0 0 16 16"><path d="M1 3.500h5l1.500 1.500H14.500v9H1z" fill="#f8e890" stroke="#806000" stroke-width="1"/><path d="M14.500 5.500v9H2" fill="none" stroke="#000" stroke-width="1"/><circle cx="5.500" cy="7" r="3.200" fill="#90e8f0" stroke="#000" stroke-width="1.100"/><path d="M8 9.500l5.500 5" stroke="#000" stroke-width="2.600"/><path d="M8.200 9.700l5 4.600" stroke="#3070e0" stroke-width="1.300"/></svg>
<svg class="a" style="left:488px;top:747px" width="16" height="16" viewBox="0 0 16 16"><rect width="16" height="16" fill="#909090"/><path d="M0 0h16L0 16z" fill="#a8a8a8"/><path d="M0 8c4-6 10-7 16-2v3c-5-4-11-3-16 2z" fill="#707070"/><ellipse cx="7.500" cy="11" rx="4.500" ry="2.300" fill="#e8f0e0"/><circle cx="7" cy="11" r="2" fill="#30b020"/><circle cx="7" cy="11" r=".8" fill="#103010"/><path d="M0 15.500h16M15.500 0v16" stroke="#606060" stroke-width="1"/><path d="M0 .5h16M.5 0v16" stroke="#d0d0d0" stroke-width="1"/></svg>
<svg class="a" style="left:0;top:0" width="1024" height="768" viewBox="0 0 1024 768"><g transform="translate(810,747)"><path d="M1 2.500L4 1.500 7 .5l3 1 3 1c.5 6-2 10-6 13C3 12.500.500 8.500 1 2.500z" fill="#c8c8f4" stroke="#1018a0" stroke-width="1.700"/><path d="M3.200 4L7 12.500l3.800-8.500" fill="none" stroke="#d82030" stroke-width="2.400"/><path d="M7 2.500l1.300 2.500-1.300 2.500-1.300-2.500z" fill="#fff"/></g><g transform="translate(827,747)"><rect x="1" y="1" width="14" height="10.500" fill="#c8c8c8" stroke="#182070" stroke-width="1.400"/><path d="M1 12.500h14" stroke="#fff" stroke-width="1"/><rect x=".5" y="13" width="6.500" height="2.500" fill="#182070"/><rect x="9" y="13" width="6.500" height="2.500" fill="#182070"/><path d="M2 14h4M10.500 14h4" stroke="#d0d0e8" stroke-width=".8"/></g><g transform="translate(847,747)"><rect x="3.500" y=".5" width="3" height="2" fill="#888"/><rect x="1" y="2" width="8.500" height="13" rx="1.500" fill="#2040d0" stroke="#101860" stroke-width="1.200"/><path d="M3 4v9" stroke="#80a0ff" stroke-width="1.200" stroke-dasharray="1.500 1"/><path d="M6 5h1.500M6 12h1.500" stroke="#e04080" stroke-width="1.200"/></g><g transform="translate(861,747)"><rect x="0" y="1" width="1.500" height="15" fill="#606060"/><rect x="1.500" y="1" width="1" height="15" fill="#000"/><rect x="2.500" y="1" width="12.500" height="10" fill="#1828d8"/><path d="M2.500 .5h12.500" stroke="#c0b060" stroke-width="1"/><rect x="7.500" y="4.500" width="2.500" height="2.500" fill="#30d050"/></g><g transform="translate(878,747)"><path d="M.5 11L5 3.500C6 1.500 7 1 9 1h7v13.500H11V11H4l-.8 3.500H.5z" fill="#d81818"/><text x="4.500" y="11.500" font-family="Liberation Sans,sans-serif" font-weight="bold" font-size="8.500" fill="#fff" textLength="11" lengthAdjust="spacingAndGlyphs">ATi</text><rect x="16.800" y="2" width="2" height="12.500" fill="#e8e8e8"/><rect x="18.800" y="2" width="1" height="12.500" fill="#404040"/><path d="M19.800 5.500c2 0 3 1 3 3s-1 3-3 3z" fill="#e02020"/></g><g transform="translate(902,750)"><circle cx="4.200" cy="4.500" r="4" fill="#a01010"/><path d="M2.500 2.800l3.400 3.400M5.900 2.800L2.500 6.200" stroke="#fff" stroke-width="1.400"/></g><g transform="translate(912,747)"><path d="M3.500 1.500l9 3.500-1 6.500-8-4z" fill="#40d8e0" stroke="#000" stroke-width="1"/><path d="M3 8l8.500 4-2.500 3.500L.800 11z" fill="#fff" stroke="#000" stroke-width="1"/><path d="M3 10l5.500 2.800M4.500 9l5 2.500" stroke="#606060" stroke-width=".8" stroke-dasharray="1 .8"/></g><g transform="translate(929,747)"><rect x="1" y="1.500" width="13" height="10.500" fill="#d0d0d0" stroke="#000" stroke-width="1.200"/><rect x="2.500" y="3.500" width="8" height="6.500" fill="#1020c0"/><path d="M10.500 1.500h3.500v4" fill="#d03030"/><path d="M9 1.500h3" stroke="#30c040" stroke-width="1.500"/><path d="M3 13h9.500v2H3z" fill="#fff" stroke="#000" stroke-width=".8"/><path d="M4.500 14.500L13.500 4" stroke="#e8e040" stroke-width="1.800"/><path d="M9.500 13.500l3-5 1 6z" fill="#d02020"/></g><g transform="translate(946,747)"><rect x="1" y="1.500" width="13" height="11.500" fill="#fff" stroke="#000" stroke-width="1"/><rect x="1" y="1.500" width="13" height="2.500" fill="#102080"/><rect x=".5" y="1" width="6.500" height="5" fill="#fff" stroke="#203090" stroke-width=".8"/><path d="M2 2v3M3.500 2v3M5 2v3" stroke="#203090" stroke-width="1"/><circle cx="11.200" cy="11.500" r="4" fill="#fff" stroke="#c01010" stroke-width="1.800"/><path d="M11.200 9.500v2.200h1.600" fill="none" stroke="#000" stroke-width="1"/></g><g transform="translate(963,747)"><path d="M1 6.500h2.500L8.500 1v14.500L3.500 10H1z" fill="#e8e070" stroke="#000" stroke-width="1"/><path d="M7.500 5v6" stroke="#000" stroke-width="1.200"/><path d="M10 8h.8" stroke="#000"/><path d="M12 5.500l3-2M12.500 8.200h3.500M12 11l3 2" stroke="#a8a8a8" stroke-width="1"/></g></svg>
<div style="left:514px;top:743px;width:164px;height:17px;box-sizing:border-box;border:1px solid #000;background:#ffffe1"></div>
<span class="t" id="t107" style="left:517.30px;top:744.84px;font-size:12px;line-height:14px;color:#000;transform:scaleX(0.8805);">Conf Cartel.jpg - ACDSee 32 v2.3</span>
</body></html>
